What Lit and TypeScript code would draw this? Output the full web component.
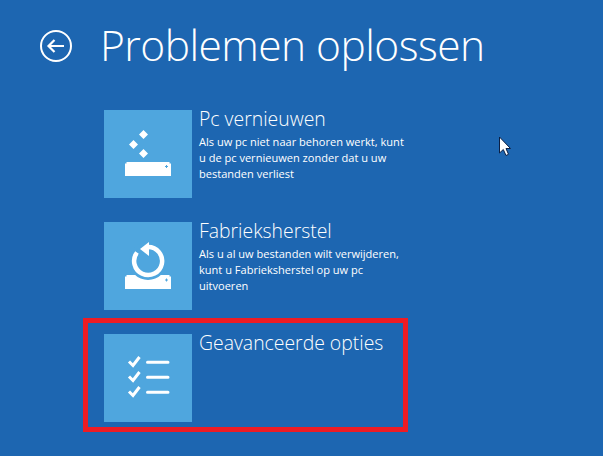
import { LitElement, html, css, svg } from "lit";
import { customElement } from "lit/decorators.js";

const restoreIcon = svg`<g fill="#fff">
  <path d="M21 53.500 h1.500 v-1.500 h43 v1.500 h1.500 V66 H21z"/>
  <path d="M39.500 20 l4.500 4.500 -4.500 4.500 -4.500 -4.500z M29.500 30 l4.500 4.500 -4.500 4.500 -4.500 -4.500z M39.500 39 l4.500 4.500 -4.500 4.500 -4.500 -4.500z"/>
</g><path d="M61 56.500 h3 M62.500 55 v3" stroke="#4fa6de" fill="none"/>`;

const resetIcon = svg`<path fill="#fff" d="M21 54.500 h1.500 v-1.500 h43 v1.500 h1.500 V67 H21z"/>
<circle cx="44" cy="39" r="19" fill="#4fa6de"/>
<path d="M61 58 h3 M62.500 56.500 v3" stroke="#4fa6de" fill="none"/>
<path fill="none" stroke="#fff" stroke-width="4.500" d="M44 25 A14 14 0 1 1 33 30.500"/>
<path fill="#fff" d="M36 27 L45 20 V34 Z"/>`;

const optionsIcon = svg`<g fill="none" stroke="#fff" stroke-width="3">
  <path d="M25 27.500 l4 4 l6.500 -8.500"/>
  <path d="M25 42.500 l4 4 l6.500 -8.500"/>
  <path d="M25 57.500 l4 4 l6.500 -8.500"/>
  <path stroke-linecap="round" d="M43.500 28.300 H64 M43.500 43.300 H64 M43.500 58.300 H64"/>
</g>`;

const items = [
  { icon: restoreIcon, title: "Pc vernieuwen", lines: ["Als uw pc niet naar behoren werkt, kunt", "u de pc vernieuwen zonder dat u uw", "bestanden verliest"] },
  { icon: resetIcon, title: "Fabrieksherstel", lines: ["Als u al uw bestanden wilt verwijderen,", "kunt u Fabrieksherstel op uw pc", "uitvoeren"] },
  { icon: optionsIcon, title: "Geavanceerde opties", lines: [] as string[] },
];

@customElement("app-root")
export class AppRoot extends LitElement {
  static styles = css`
    :host {
      display: block;
      width: 603px;
      height: 456px;
      position: relative;
      overflow: hidden;
      background: #1d66b1;
      color: #fff;
      font-family: "Open Sans", "Noto Sans", sans-serif;
    }
    .header {
      display: flex;
      align-items: center;
      gap: 27px;
      padding: 22px 0 0 39px;
      height: 52px;
    }
    .back { width: 34px; height: 34px; flex: none; margin-top: -4px; }
    h1 {
      margin: -6px 0 0;
      font-size: 42.500px;
      font-weight: 300;
      line-height: 52px;
      letter-spacing: -0.550px;
      white-space: nowrap;
    }
    .list {
      display: flex;
      flex-direction: column;
      gap: 24px;
      padding: 36px 0 0 104px;
    }
    .item { display: flex; gap: 7px; height: 88px; }
    .tile { width: 88px; height: 88px; background: #4fa6de; flex: none; display: block; }
    .title {
      font-size: 19.400px;
      font-weight: 300;
      line-height: 24px;
      margin-top: -3px;
      white-space: nowrap;
    }
    .desc {
      font-size: 11.050px;
      line-height: 16px;
      margin-top: 3px;
      white-space: nowrap;
    }
    .highlight {
      position: absolute;
      left: 83px;
      top: 318px;
      width: 325px;
      height: 114px;
      box-sizing: border-box;
      border: 5px solid #ed1c24;
    }
    .cursor { position: absolute; left: 498px; top: 136px; width: 14px; height: 21px; }
  `;

  render() {
    return html`
      <div class="header">
        <svg class="back" viewBox="0 0 34 34" fill="none" stroke="#fff">
          <circle cx="17" cy="17" r="15" stroke-width="2"/>
          <path stroke-width="2.200" d="M25 17 H10 M15.500 11 L9.500 17 L15.500 23"/>
        </svg>
        <h1>Problemen oplossen</h1>
      </div>
      <div class="list">
        ${items.map(
          (it) => html`
            <div class="item">
              <svg class="tile" viewBox="0 0 88 88">${it.icon}</svg>
              <div>
                <div class="title">${it.title}</div>
                <div class="desc">${it.lines.map((l) => html`<div>${l}</div>`)}</div>
              </div>
            </div>
          `
        )}
      </div>
      <div class="highlight"></div>
      <svg class="cursor" viewBox="0 0 14 21">
        <path d="M1.500 1 V17 L5.300 13.500 L8 19.500 L10.500 18.300 L8 12.500 H12.500 Z" fill="#fff" stroke="#0b1f44" stroke-width="1"/>
      </svg>
    `;
  }
}
